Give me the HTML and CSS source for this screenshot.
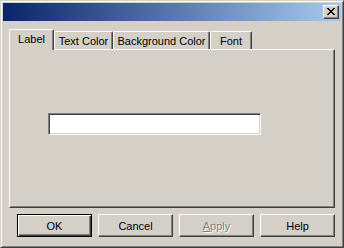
FILE: index.html
```html
<!DOCTYPE html>
<html lang="en">
<head>
    <meta charset="UTF-8">
    <title>Label Properties</title>
    <link rel="stylesheet" href="styles.css">
</head>
<body>
    <div class="window">
        <div class="titlebar">
            <button class="close-button" aria-label="Close">
                <svg width="8" height="7" viewBox="0 0 8 7">
                    <path d="M0 0h2v1h1v1h2v-1h1v-1h2v1h-1v1h-1v1h-1v1h1v1h1v1h1v1h-2v-1h-1v-1h-2v1h-1v1h-2v-1h1v-1h1v-1h1v-1h-1v-1h-1v-1h-1z" fill="#000"/>
                </svg>
            </button>
        </div>
        <div class="client">
            <div class="tabs">
                <div class="tab selected">Label</div>
                <div class="tab tab-text">Text Color</div>
                <div class="tab tab-bg">Background Color</div>
                <div class="tab tab-font">Font</div>
            </div>
            <div class="panel">
                <input type="text" class="textbox">
            </div>
            <div class="buttons">
                <button class="button default">OK</button>
                <button class="button">Cancel</button>
                <button class="button disabled"><span class="accel">A</span>pply</button>
                <button class="button">Help</button>
            </div>
        </div>
    </div>
</body>
</html>
```

FILE: styles.css
```css
body {
    margin: 0;
    background-color: #d4d0c8;
    font-family: "Liberation Sans", Arial, sans-serif;
    font-size: 11px;
    color: #000000;
}

.window {
    width: 344px;
    height: 248px;
    box-sizing: border-box;
    background-color: #d4d0c8;
    border-top: 1px solid #d4d0c8;
    border-left: 1px solid #d4d0c8;
    border-right: 1px solid #404040;
    border-bottom: 1px solid #404040;
    box-shadow: inset 1px 1px #ffffff, inset -1px -1px #808080;
    padding: 2px;
    display: flex;
    flex-direction: column;
}

.titlebar {
    height: 18px;
    background: linear-gradient(to right, #0a246a, #a6caf0);
    display: flex;
    align-items: center;
    justify-content: flex-end;
    padding-right: 2px;
}

.close-button {
    width: 16px;
    height: 14px;
    padding: 0;
    margin: 0;
    background-color: #d4d0c8;
    border-top: 1px solid #ffffff;
    border-left: 1px solid #ffffff;
    border-right: 1px solid #404040;
    border-bottom: 1px solid #404040;
    box-shadow: inset -1px -1px #808080;
    display: flex;
    align-items: center;
    justify-content: center;
}

.close-button svg {
    display: block;
    margin-bottom: 1px;
}

.client {
    flex: 1;
    padding: 8px 6px 8px 6px;
    display: flex;
    flex-direction: column;
}

/* Reiter */
.tabs {
    display: flex;
    align-items: flex-end;
    height: 20px;
}

.tab {
    height: 18px;
    box-sizing: border-box;
    border-top: 1px solid #ffffff;
    border-left: 1px solid #ffffff;
    border-right: 1px solid #404040;
    box-shadow: inset -1px 0 #808080;
    border-top-left-radius: 2px;
    border-top-right-radius: 2px;
    padding-top: 3px;
    text-align: center;
    white-space: nowrap;
    background-color: #d4d0c8;
}

.tab.selected {
    width: 45px;
    height: 21px;
    padding-top: 3px;
    margin-bottom: -1px;
    position: relative;
    z-index: 1;
}

.tab-text {
    width: 59px;
}

.tab-bg {
    width: 97px;
}

.tab-font {
    width: 42px;
}

.panel {
    height: 159px;
    box-sizing: border-box;
    border-top: 1px solid #ffffff;
    border-left: 1px solid #ffffff;
    border-right: 1px solid #404040;
    border-bottom: 1px solid #404040;
    box-shadow: inset -1px -1px #808080;
    padding: 63px 0 0 38px;
}

.textbox {
    display: block;
    width: 213px;
    height: 22px;
    box-sizing: border-box;
    margin: 0;
    background-color: #ffffff;
    border-top: 1px solid #808080;
    border-left: 1px solid #808080;
    border-right: 1px solid #ffffff;
    border-bottom: 1px solid #ffffff;
    box-shadow: inset 1px 1px #404040, inset -1px -1px #d4d0c8;
    outline: none;
}

.buttons {
    display: flex;
    gap: 6px;
    margin-top: 6px;
    padding-left: 8px;
}

.button {
    width: 75px;
    height: 23px;
    box-sizing: border-box;
    margin: 0;
    padding: 0;
    font-family: "Liberation Sans", Arial, sans-serif;
    font-size: 11px;
    color: #000000;
    background-color: #d4d0c8;
    border-top: 1px solid #ffffff;
    border-left: 1px solid #ffffff;
    border-right: 1px solid #404040;
    border-bottom: 1px solid #404040;
    box-shadow: inset -1px -1px #808080;
}

.button.default {
    border: 1px solid #000000;
    box-shadow: inset 1px 1px #ffffff, inset -1px -1px #404040, inset -2px -2px #808080;
}

.button.disabled {
    color: #808080;
    text-shadow: 1px 1px #ffffff;
}

.accel {
    text-decoration: underline;
}
```
